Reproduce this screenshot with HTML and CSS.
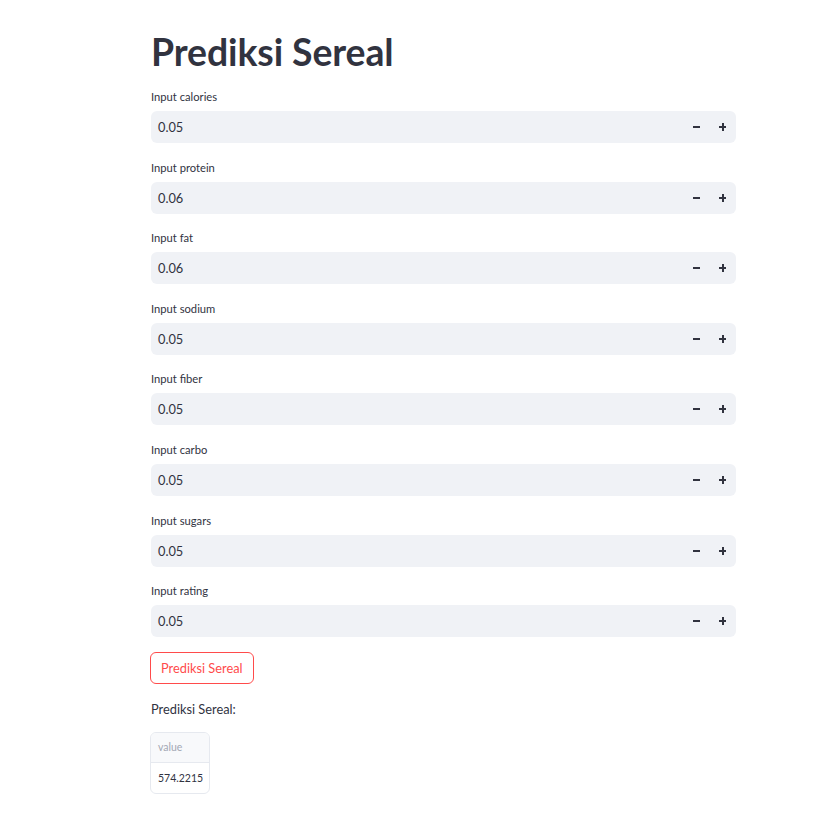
FILE: index.html
```html
<!DOCTYPE html>
<html>
<head>
<meta charset="utf-8">
<link rel="stylesheet" href="styles.css">
</head>
<body>
<main class="main">
  <h1 class="title">Prediksi Sereal</h1>
  <div class="fields">
    <div class="field"><label class="label">Input calories</label><div class="num"><span class="val">0.05</span><span class="step minus"></span><span class="step plus"></span></div></div>
    <div class="field"><label class="label">Input protein</label><div class="num"><span class="val">0.06</span><span class="step minus"></span><span class="step plus"></span></div></div>
    <div class="field"><label class="label">Input fat</label><div class="num"><span class="val">0.06</span><span class="step minus"></span><span class="step plus"></span></div></div>
    <div class="field"><label class="label">Input sodium</label><div class="num"><span class="val">0.05</span><span class="step minus"></span><span class="step plus"></span></div></div>
    <div class="field"><label class="label">Input fiber</label><div class="num"><span class="val">0.05</span><span class="step minus"></span><span class="step plus"></span></div></div>
    <div class="field"><label class="label">Input carbo</label><div class="num"><span class="val">0.05</span><span class="step minus"></span><span class="step plus"></span></div></div>
    <div class="field"><label class="label">Input sugars</label><div class="num"><span class="val">0.05</span><span class="step minus"></span><span class="step plus"></span></div></div>
    <div class="field"><label class="label">Input rating</label><div class="num"><span class="val">0.05</span><span class="step minus"></span><span class="step plus"></span></div></div>
  </div>
  <button class="btn">Prediksi Sereal</button>
  <p class="result">Prediksi Sereal:</p>
  <div class="table">
    <div class="th">value</div>
    <div class="td">574.2215</div>
  </div>
</main>
</body>
</html>
```
FILE: styles.css
```css
html, body { margin: 0; padding: 0; background: #fff; }
body { font-family: Lato, "Noto Sans", sans-serif; color: #31333f; }
.main { width: 585px; margin-left: 151px; padding-top: 30px; }
.title { margin: 0; font-size: 37.4px; font-weight: 700; line-height: 44px; letter-spacing: -0.1px; height: 46px; }
.fields { display: flex; flex-direction: column; gap: 17.6px; margin-top: 14px; }
.field { display: flex; flex-direction: column; }
.label { font-size: 11.2px; line-height: 14px; height: 14px; margin-bottom: 7px; }
.num { height: 32px; background: #f0f2f6; border-radius: 6px; display: flex; align-items: center; }
.val { flex: 1; padding-left: 7px; font-size: 12.8px; }
.step { width: 26px; height: 32px; position: relative; }
.step::before, .step::after { content: ""; position: absolute; background: #31333f; }
.minus::before { left: 9px; top: 15px; width: 7px; height: 2px; }
.minus::after { display: none; }
.plus::before { left: 9px; top: 15px; width: 7px; height: 2px; }
.plus::after { left: 12px; top: 12px; width: 2px; height: 8px; }
.btn { display: block; margin-top: 15px; margin-left: -1px; height: 32px; padding: 0 10px; background: #fff; border: 1px solid #ff4b4b; border-radius: 6px; color: #ff4b4b; font-family: Lato, "Noto Sans", sans-serif; font-size: 12.8px; }
.result { margin: 17px 0 0 0; font-size: 12.8px; line-height: 16px; }
.table { margin-top: 15px; margin-left: -1px; width: 58px; border: 1px solid #e6e9ef; border-radius: 6px; overflow: hidden; font-size: 10.5px; }
.th { height: 29px; line-height: 29px; padding-left: 7px; background: #f8f9fb; color: #a3a8b4; border-bottom: 1px solid #e6e9ef; }
.td { height: 30px; line-height: 30px; padding-left: 7px; color: #31333f; }
```
